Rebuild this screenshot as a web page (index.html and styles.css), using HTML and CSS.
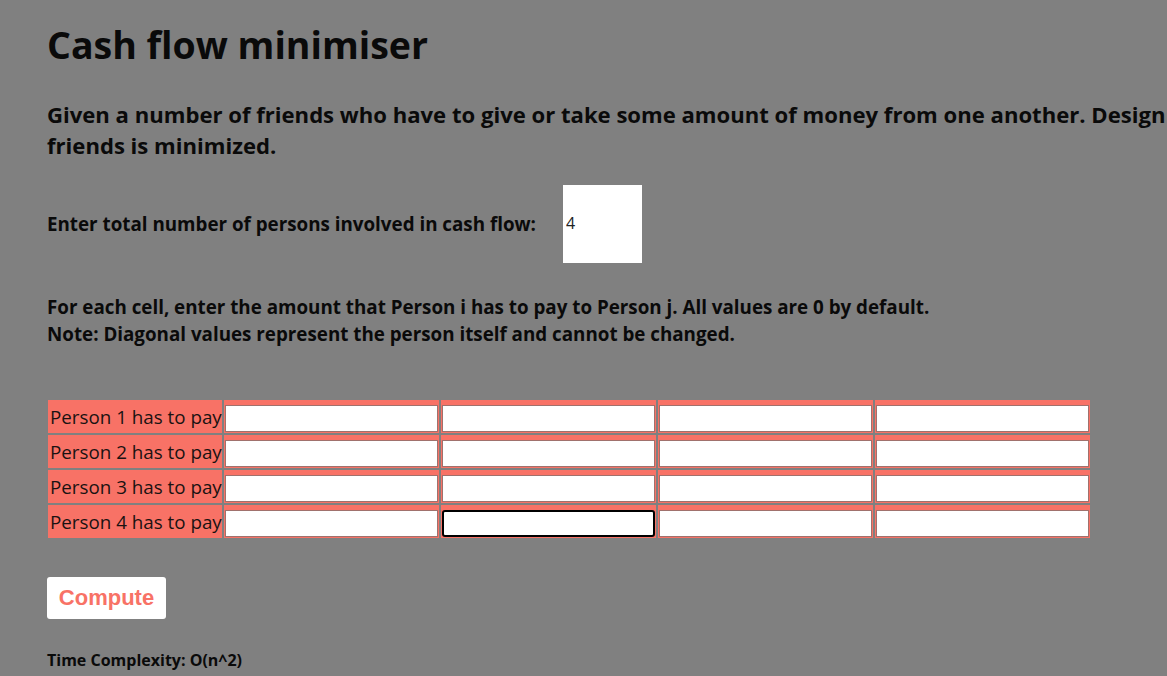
FILE: index.html
```html
<!DOCTYPE html>
<html lang="en">
<head>
<meta charset="utf-8">
<title>Cash flow minimiser</title>
<link rel="stylesheet" href="styles.css">
</head>
<body>
<main class="page">
  <h1 class="title">Cash flow minimiser</h1>
  <p class="intro">Given a number of friends who have to give or take some amount of money from one another. Design an algorithm by which the total cash flow among all the<br>friends is minimized.</p>

  <div class="count-row">
    <label class="count-label" for="count">Enter total number of persons involved in cash flow:</label>
    <input class="count-input" id="count" type="text" value="4">
  </div>

  <p class="instructions">For each cell, enter the amount that Person i has to pay to Person j. All values are 0 by default.<br>Note: Diagonal values represent the person itself and cannot be changed.</p>

  <table class="matrix">
    <tbody>
      <tr>
        <td class="who">Person 1 has to pay</td>
        <td class="cell"><input class="amount" type="text"></td>
        <td class="cell"><input class="amount" type="text"></td>
        <td class="cell"><input class="amount" type="text"></td>
        <td class="cell"><input class="amount" type="text"></td>
      </tr>
      <tr>
        <td class="who">Person 2 has to pay</td>
        <td class="cell"><input class="amount" type="text"></td>
        <td class="cell"><input class="amount" type="text"></td>
        <td class="cell"><input class="amount" type="text"></td>
        <td class="cell"><input class="amount" type="text"></td>
      </tr>
      <tr>
        <td class="who">Person 3 has to pay</td>
        <td class="cell"><input class="amount" type="text"></td>
        <td class="cell"><input class="amount" type="text"></td>
        <td class="cell"><input class="amount" type="text"></td>
        <td class="cell"><input class="amount" type="text"></td>
      </tr>
      <tr>
        <td class="who">Person 4 has to pay</td>
        <td class="cell"><input class="amount" type="text"></td>
        <td class="cell"><input class="amount amount-focus" type="text"></td>
        <td class="cell"><input class="amount" type="text"></td>
        <td class="cell"><input class="amount" type="text"></td>
      </tr>
    </tbody>
  </table>

  <button class="compute" type="button">Compute</button>

  <p class="complexity">Time Complexity: O(n^2)</p>
</main>
</body>
</html>
```
FILE: styles.css
```css
html, body {
  margin: 0;
  padding: 0;
  overflow: hidden;
}

body {
  background: #808080;
  color: #0a0a0a;
  font-family: "Open Sans", "Noto Sans", "DejaVu Sans", sans-serif;
}

.page {
  padding: 0 0 0 47px;
  width: 2200px;
}

.title {
  margin: 0;
  padding-top: 22px;
  font-size: 37.5px;
  line-height: 46px;
  font-weight: 700;
}

.intro {
  margin: 31px 0 0 0;
  font-size: 22.1px;
  line-height: 31px;
  font-weight: 700;
  white-space: nowrap;
}

.count-row {
  display: flex;
  align-items: center;
  margin-top: 24px;
}

.count-label {
  font-size: 18.8px;
  font-weight: 700;
}

.count-input {
  margin-left: 27px;
  width: 79px;
  height: 78px;
  box-sizing: border-box;
  border: none;
  padding: 0 0 3px 3px;
  background: #fff;
  font-family: "Open Sans", "Noto Sans", sans-serif;
  font-size: 16px;
  color: #222;
}

.instructions {
  margin: 31px 0 0 0;
  font-size: 18.8px;
  line-height: 27px;
  font-weight: 700;
}

.matrix {
  margin-top: 50px;
  margin-left: -1px;
  border-collapse: separate;
  border-spacing: 2px;
}

.matrix td {
  background: #f87266;
  height: 33px;
  box-sizing: border-box;
}

.who {
  padding: 0 0 0 2px;
  font-size: 18.8px;
  color: #1a1212;
  white-space: nowrap;
  vertical-align: middle;
}

.cell {
  padding: 5px 1px 1px 1px;
  vertical-align: top;
}

.amount {
  display: block;
  width: 213px;
  height: 27px;
  box-sizing: border-box;
  margin: 0;
  border: 1px solid #a0716d;
  background: #fff;
  padding: 0 3px;
}

.amount-focus {
  border: 2px solid #000;
  border-radius: 3px;
}

.compute {
  display: block;
  margin-top: 37px;
  width: 119px;
  height: 42px;
  border: none;
  border-radius: 3px;
  background: #fff;
  color: #f87266;
  font-family: "Liberation Sans", Arial, sans-serif;
  font-weight: 700;
  font-size: 22px;
  padding: 0;
}

.complexity {
  margin: 30px 0 0 0;
  font-size: 16px;
  font-weight: 700;
}
```
